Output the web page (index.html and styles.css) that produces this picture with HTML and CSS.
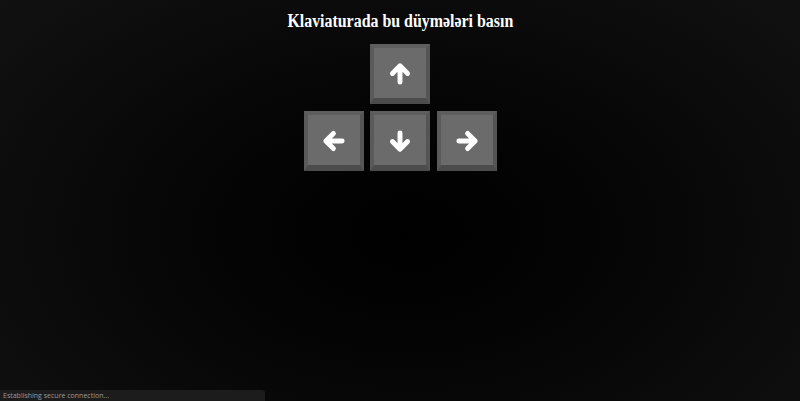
FILE: index.html
```html
<!DOCTYPE html>
<html lang="az">
<head>
<meta charset="utf-8">
<title>Klaviatura</title>
<link rel="stylesheet" href="styles.css">
</head>
<body>
<main class="page">
  <h1 class="title">Klaviaturada bu düymələri basın</h1>
  <div class="keys">
    <div class="key key-up">
      <svg viewBox="0 0 24 24" class="arrow"><path d="M12 19V5M5.5 11.5L12 5l6.5 6.5"/></svg>
    </div>
    <div class="key key-left">
      <svg viewBox="0 0 24 24" class="arrow"><path d="M19 12H5M11.5 5.5L5 12l6.5 6.5"/></svg>
    </div>
    <div class="key key-down">
      <svg viewBox="0 0 24 24" class="arrow"><path d="M12 5v14M5.5 12.5L12 19l6.5-6.5"/></svg>
    </div>
    <div class="key key-right">
      <svg viewBox="0 0 24 24" class="arrow"><path d="M5 12h14M12.5 5.5L19 12l-6.5 6.5"/></svg>
    </div>
  </div>
</main>
<div class="status">Establishing secure connection...</div>
</body>
</html>
```

FILE: styles.css
```css
html, body {
  margin: 0;
  padding: 0;
  height: 100%;
}
body {
  background: radial-gradient(ellipse 75% 95% at 51% 58%, #000 0%, #050505 35%, #0f0f0f 80%, #121212 100%);
  overflow: hidden;
  font-family: "Liberation Serif", "Times New Roman", serif;
}
.page {
  display: flex;
  flex-direction: column;
  align-items: center;
  padding-top: 11px;
}
.title {
  margin: 0 0 13px;
  font-size: 18.5px;
  font-weight: bold;
  color: #fff;
  line-height: 20px;
  white-space: nowrap;
  transform: scaleX(0.86);
}
.keys {
  display: grid;
  grid-template-columns: repeat(3, 60px);
  grid-template-rows: repeat(2, 60px);
  column-gap: 6.5px;
  row-gap: 7px;
}
.key {
  box-sizing: border-box;
  background: #6b6b6b;
  border-style: solid;
  border-width: 4px 4px 6px 4px;
  border-color: #5e5e5e #555555 #4c4c4c #5a5a5a;
  display: flex;
  align-items: center;
  justify-content: center;
}
.key-up { grid-column: 2; grid-row: 1; }
.key-left { grid-column: 1; grid-row: 2; }
.key-down { grid-column: 2; grid-row: 2; }
.key-right { grid-column: 3; grid-row: 2; }
.arrow {
  width: 28px;
  height: 28px;
  fill: none;
  stroke: #fff;
  stroke-width: 4.2;
  stroke-linecap: round;
  stroke-linejoin: round;
  margin-top: 2px;
}
.status {
  position: fixed;
  left: 0;
  bottom: 0;
  width: 262px;
  height: 11px;
  background: #1c1c1c;
  border-top-right-radius: 3px;
  color: #9a9a9a;
  font-family: "Open Sans", sans-serif;
  font-size: 7px;
  line-height: 11px;
  padding-left: 3px;
}
```
